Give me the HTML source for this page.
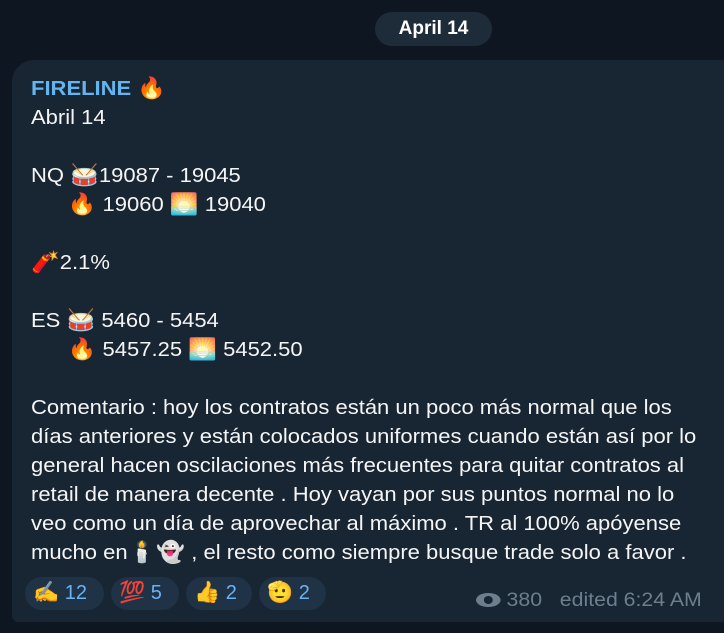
<!DOCTYPE html>
<html><head><meta charset="utf-8"><style>
body{margin:0;width:724px;height:633px;background:#0e1621;font-family:"Liberation Sans","DejaVu Sans",sans-serif;overflow:hidden;position:relative;color:#f5f5f5}
.date{position:absolute;left:375px;top:12px;width:117px;height:34px;border-radius:17px;background:#1e2c3a;color:#fff;font-weight:bold;font-size:19px;line-height:34px;text-align:center}
.bub{position:absolute;left:12px;top:60px;width:740px;height:562px;background:#182533;border-radius:22px 22px 22px 6px}
.t{position:absolute;left:31px;top:75px;font-size:20px;line-height:29px;white-space:nowrap;transform:scaleX(1.1);transform-origin:0 0}
.n{color:#64b5ef;font-weight:bold}
.e{font-size:21px;line-height:20px}
.r{position:absolute;top:577px;height:33px;border-radius:17px;background:#1f3246;color:#6ab3f3;font-size:20px;line-height:33px;padding:0 8px;box-sizing:border-box;white-space:nowrap}
.meta{position:absolute;left:476px;top:590px;color:#6d7f8f;font-size:19px;white-space:nowrap;transform:scaleX(1.12);transform-origin:0 0}
</style></head><body>
<div class="date">April 14</div>
<div class="bub"></div>
<div class="t"><span class="n">FIRELINE</span> <span class="e">🔥</span><br>Abril 14<br><br>NQ <span class="e">🥁</span>19087 - 19045<br>&nbsp;&nbsp;&nbsp;&nbsp;&nbsp;&nbsp;<span class="e">🔥</span> 19060 <span class="e">🌅</span> 19040<br><br><span class="e">🧨</span>2.1%<br><br>ES <span class="e">🥁</span> 5460 - 5454<br>&nbsp;&nbsp;&nbsp;&nbsp;&nbsp;&nbsp;<span class="e">🔥</span> 5457.25 <span class="e">🌅</span> 5452.50<br><br>Comentario : hoy los contratos están un poco más normal que los<br>días anteriores y están colocados uniformes cuando están así por lo<br>general hacen oscilaciones más frecuentes para quitar contratos al<br>retail de manera decente . Hoy vayan por sus puntos normal no lo<br>veo como un día de aprovechar al máximo . TR al 100% apóyense<br>mucho en<span class="e">🕯️👻</span> , el resto como siempre busque trade solo a favor .</div>
<div class="r" style="left:25px;width:79px"><span class="e">✍️</span> 12</div>
<div class="r" style="left:111px;width:68px"><span class="e">💯</span> 5</div>
<div class="r" style="left:186px;width:66px"><span class="e">👍</span> 2</div>
<div class="r" style="left:259px;width:67px"><span class="e">🫡</span> 2</div>
<div class="meta"><span style="display:inline-block;width:22px;height:14px;border-radius:50%;background:#6d7f8f;vertical-align:-1px;position:relative"><span style="position:absolute;left:7px;top:3px;width:8px;height:8px;border-radius:50%;background:#182533"></span></span> 380&nbsp;&nbsp; edited 6:24 AM</div>
</body></html>
